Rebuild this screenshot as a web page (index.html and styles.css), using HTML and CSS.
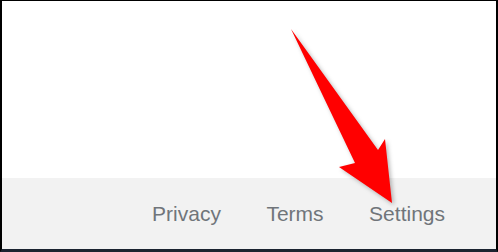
FILE: index.html
```html
<!DOCTYPE html>
<html>
<head>
<meta charset="utf-8">
<link rel="stylesheet" href="styles.css">
</head>
<body>
<div class="frame">
  <main class="content"></main>
  <footer class="footer">
    <a class="link" href="#">Privacy</a>
    <a class="link" href="#">Terms</a>
    <a class="link" href="#">Settings</a>
  </footer>
  <svg class="arrow" width="498" height="252" viewBox="0 0 498 252">
    <polygon points="291,29 378,150 385,139 392,203 339,167 355,163" fill="#ff0000"/>
  </svg>
</div>
</body>
</html>
```
FILE: styles.css
```css
html, body {
  margin: 0;
  padding: 0;
  background: #000;
}
.frame {
  position: relative;
  width: 498px;
  height: 252px;
  box-sizing: border-box;
  border-top: 1px solid #000;
  border-left: 2px solid #000;
  border-right: 2px solid #000;
  border-bottom: 3px solid #1b2330;
  display: flex;
  flex-direction: column;
  background: #fff;
  overflow: hidden;
}
.content {
  height: 177px;
  background: #fff;
}
.footer {
  flex: 1;
  background: #f2f2f2;
  display: flex;
  justify-content: flex-end;
  align-items: center;
  gap: 45.5px;
  padding-right: 51px;
}
.link {
  font-family: "Liberation Sans", Arial, sans-serif;
  font-size: 21px;
  color: #70757a;
  text-decoration: none;
}
.arrow {
  position: absolute;
  left: -2px;
  top: -1px;
  filter: drop-shadow(2px 2px 2px rgba(0,0,0,0.28));
}
```
